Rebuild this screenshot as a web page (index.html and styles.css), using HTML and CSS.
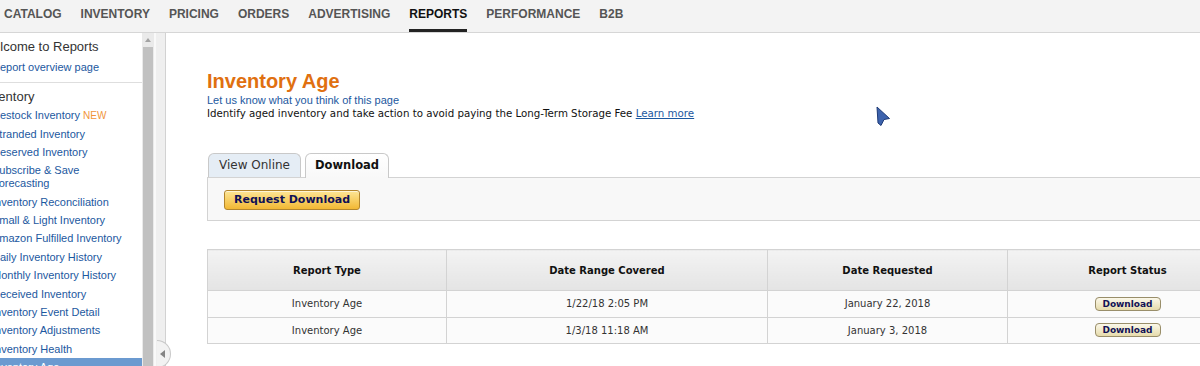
FILE: index.html
```html
<!DOCTYPE html>
<html lang="en">
<head>
  <meta charset="UTF-8" />
  <title>Inventory Age - Reports</title>
  <link rel="stylesheet" href="styles.css">
</head>
<body>
  <nav class="topnav">
    <a href="#">CATALOG</a>
    <a href="#">INVENTORY</a>
    <a href="#">PRICING</a>
    <a href="#">ORDERS</a>
    <a href="#">ADVERTISING</a>
    <a href="#" class="active">REPORTS</a>
    <a href="#">PERFORMANCE</a>
    <a href="#">B2B</a>
  </nav>

  <div class="page">
    <aside class="sidebar">
      <div class="side-content">
        <div class="side-block welcome">
          <h3>Welcome to Reports</h3>
          <a href="#" class="overview">Report overview page</a>
        </div>
        <div class="side-block inventory">
          <h3>Inventory</h3>
          <ul class="side-links">
            <li><a href="#">Restock Inventory</a> <span class="new">NEW</span></li>
            <li><a href="#">Stranded Inventory</a></li>
            <li><a href="#">Reserved Inventory</a></li>
            <li><a href="#">Subscribe &amp; Save<br>Forecasting</a></li>
            <li><a href="#">Inventory Reconciliation</a></li>
            <li><a href="#">Small &amp; Light Inventory</a></li>
            <li><a href="#">Amazon Fulfilled Inventory</a></li>
            <li><a href="#">Daily Inventory History</a></li>
            <li><a href="#">Monthly Inventory History</a></li>
            <li><a href="#">Received Inventory</a></li>
            <li><a href="#">Inventory Event Detail</a></li>
            <li><a href="#">Inventory Adjustments</a></li>
            <li><a href="#">Inventory Health</a></li>
            <li class="selected"><a href="#">Inventory Age</a></li>
          </ul>
        </div>
      </div>
      <div class="scrollbar">
        <span class="arrow-up"></span>
        <span class="thumb"></span>
      </div>
    </aside>

    <div class="split"><span class="handle"></span></div>

    <main class="content">
      <div class="report">
        <h1>Inventory Age</h1>
        <a href="#" class="feedback">Let us know what you think of this page</a>
        <p class="intro">Identify aged inventory and take action to avoid paying the Long-Term Storage Fee <a href="#">Learn more</a></p>

        <div class="tabs">
          <div class="tab">View Online</div>
          <div class="tab active">Download</div>
        </div>
        <div class="tab-panel">
          <button class="btn-request">Request Download</button>
        </div>

        <table class="reports">
          <thead>
            <tr>
              <th class="c1">Report Type</th>
              <th class="c2">Date Range Covered</th>
              <th class="c3">Date Requested</th>
              <th class="c4">Report Status</th>
            </tr>
          </thead>
          <tbody>
            <tr>
              <td>Inventory Age</td>
              <td>1/22/18 2:05 PM</td>
              <td>January 22, 2018</td>
              <td><button class="btn-small">Download</button></td>
            </tr>
            <tr>
              <td>Inventory Age</td>
              <td>1/3/18 11:18 AM</td>
              <td>January 3, 2018</td>
              <td><button class="btn-small">Download</button></td>
            </tr>
          </tbody>
        </table>
      </div>
    </main>
  </div>

  <svg class="cursor" width="18" height="22" viewBox="0 0 18 22">
    <polygon points="2,2 14.5,13.5 9,14.5 6,20.5 3,18" fill="#3d63ad" stroke="#1d3a77" stroke-width="1" stroke-linejoin="round"/>
  </svg>
</body>
</html>
```

FILE: styles.css
```css
* { box-sizing: border-box; }
body { margin: 0; width: 1200px; height: 366px; overflow: hidden; position: relative; background: #fff; font-family: "DejaVu Sans", Verdana, sans-serif; color: #333; }
a { text-decoration: none; }

/* top navigation */
.topnav { height: 33px; background: #f3f3f3; border-bottom: 1px solid #d6d6d6; display: flex; gap: 19px; padding-left: 4px; font-family: "Liberation Sans", Arial, sans-serif; }
.topnav a { font-size: 12px; font-weight: bold; color: #555; line-height: 29px; border-bottom: 3px solid transparent; }
.topnav a.active { color: #111; border-bottom-color: #232323; }

.page { display: flex; height: 333px; }

/* left menu */
.sidebar { display: flex; font-family: "Liberation Sans", Arial, sans-serif; }
.side-content { width: 142px; overflow: hidden; }
.side-block { margin-left: -19px; }
.side-block h3 { margin: 0; font-size: 13px; font-weight: normal; line-height: 16px; color: #333; }
.welcome { padding: 6px 0 8px; border-bottom: 1px solid #dedede; }
.overview { display: block; margin-top: 5px; padding-left: 11px; font-size: 11px; line-height: 14px; color: #1c58a0; }
.inventory { padding-top: 6px; }
.inventory h3 { margin-bottom: 1.5px; }
.side-links { list-style: none; margin: 0; padding: 0; }
.side-links li { padding: 2.7px 0 2.7px 11px; font-size: 11px; line-height: 13px; white-space: nowrap; }
.side-links a { color: #1c58a0; }
.side-links .new { color: #f0953a; font-size: 10px; }
.side-links li.selected { background: #6b9ad0; }
.side-links li.selected a { color: #fff; }

.scrollbar { width: 12px; background: #eaeaea; display: flex; flex-direction: column; align-items: center; padding-top: 5px; }
.arrow-up { width: 0; height: 0; border-left: 3px solid transparent; border-right: 3px solid transparent; border-bottom: 4px solid #a3a3a3; }
.thumb { flex: 1; width: 10px; margin-top: 5px; background: #c1c1c1; }

.split { width: 12px; position: relative; background: #efefef; border-left: 2px solid #f9f9f9; border-right: 1px solid #d2d2d2; }
.handle { position: absolute; left: 1px; top: 307px; width: 14px; height: 28px; background: #f2f2f2; border: 1px solid #c8c8c8; border-left: none; border-radius: 0 14px 14px 0; }
.handle::before { content: ""; position: absolute; left: 3px; top: 9px; border-top: 4px solid transparent; border-bottom: 4px solid transparent; border-right: 5px solid #858585; }

/* report area */
.content { flex: 1; overflow: hidden; padding: 36px 0 0 41px; }
.report { width: 1041px; }
.report h1 { margin: 0; font-family: "Liberation Sans", Arial, sans-serif; font-size: 20px; line-height: 24px; color: #e07010; }
.feedback { display: block; margin-top: 1px; font-family: "Liberation Sans", Arial, sans-serif; font-size: 11px; line-height: 12.5px; color: #1c58a0; }
.intro { margin: 0; font-size: 10.25px; line-height: 12.5px; color: #111; }
.intro a { color: #1c58a0; text-decoration: underline; }

.tabs { display: flex; gap: 4px; margin-top: 34px; padding-left: 1px; }
.tab { height: 24px; padding: 0 10px; line-height: 23px; font-size: 12px; color: #333; background: #e5edf5; border: 1px solid #c9c9c9; border-bottom: none; border-radius: 6px 6px 0 0; }
.tab.active { height: 25px; margin-bottom: -1px; padding: 0 9px; position: relative; font-size: 11.5px; font-weight: bold; color: #111; background: linear-gradient(#fff, #f8f8f8); }
.tab-panel { height: 44px; padding: 10px 0 0 16px; background: #f8f8f8; border: 1px solid #d3d3d3; }
.btn-request { height: 20px; padding: 0 9px; font-family: "DejaVu Sans", Verdana, sans-serif; font-size: 11px; font-weight: bold; color: #0f1155; border: 1px solid #b3862d; border-radius: 3px; background: linear-gradient(#fde696, #f2b834); box-shadow: inset 0 1px 0 rgba(255,255,255,.6); }

.reports { margin-top: 28px; width: 1041px; border-collapse: collapse; table-layout: fixed; border: 1px solid #cbcbcb; font-size: 10px; }
.reports th, .reports td { border: 1px solid #d3d3d3; text-align: center; }
.reports th { height: 41px; font-weight: bold; color: #111; background: linear-gradient(#f3f3f3, #e4e4e4); }
.reports td { height: 26.5px; color: #333; background: #fbfbfb; }
.reports .c1 { width: 239px; }
.reports .c2 { width: 321px; }
.reports .c3 { width: 240px; }
.btn-small { width: 66px; height: 14px; padding: 0; font-family: "DejaVu Sans", Verdana, sans-serif; font-size: 9px; font-weight: bold; line-height: 12px; color: #111155; border: 1px solid #998e6a; border-radius: 4px; background: linear-gradient(#fbf8ea, #e6dbab); vertical-align: middle; }

.cursor { position: absolute; left: 875px; top: 105px; }
```
